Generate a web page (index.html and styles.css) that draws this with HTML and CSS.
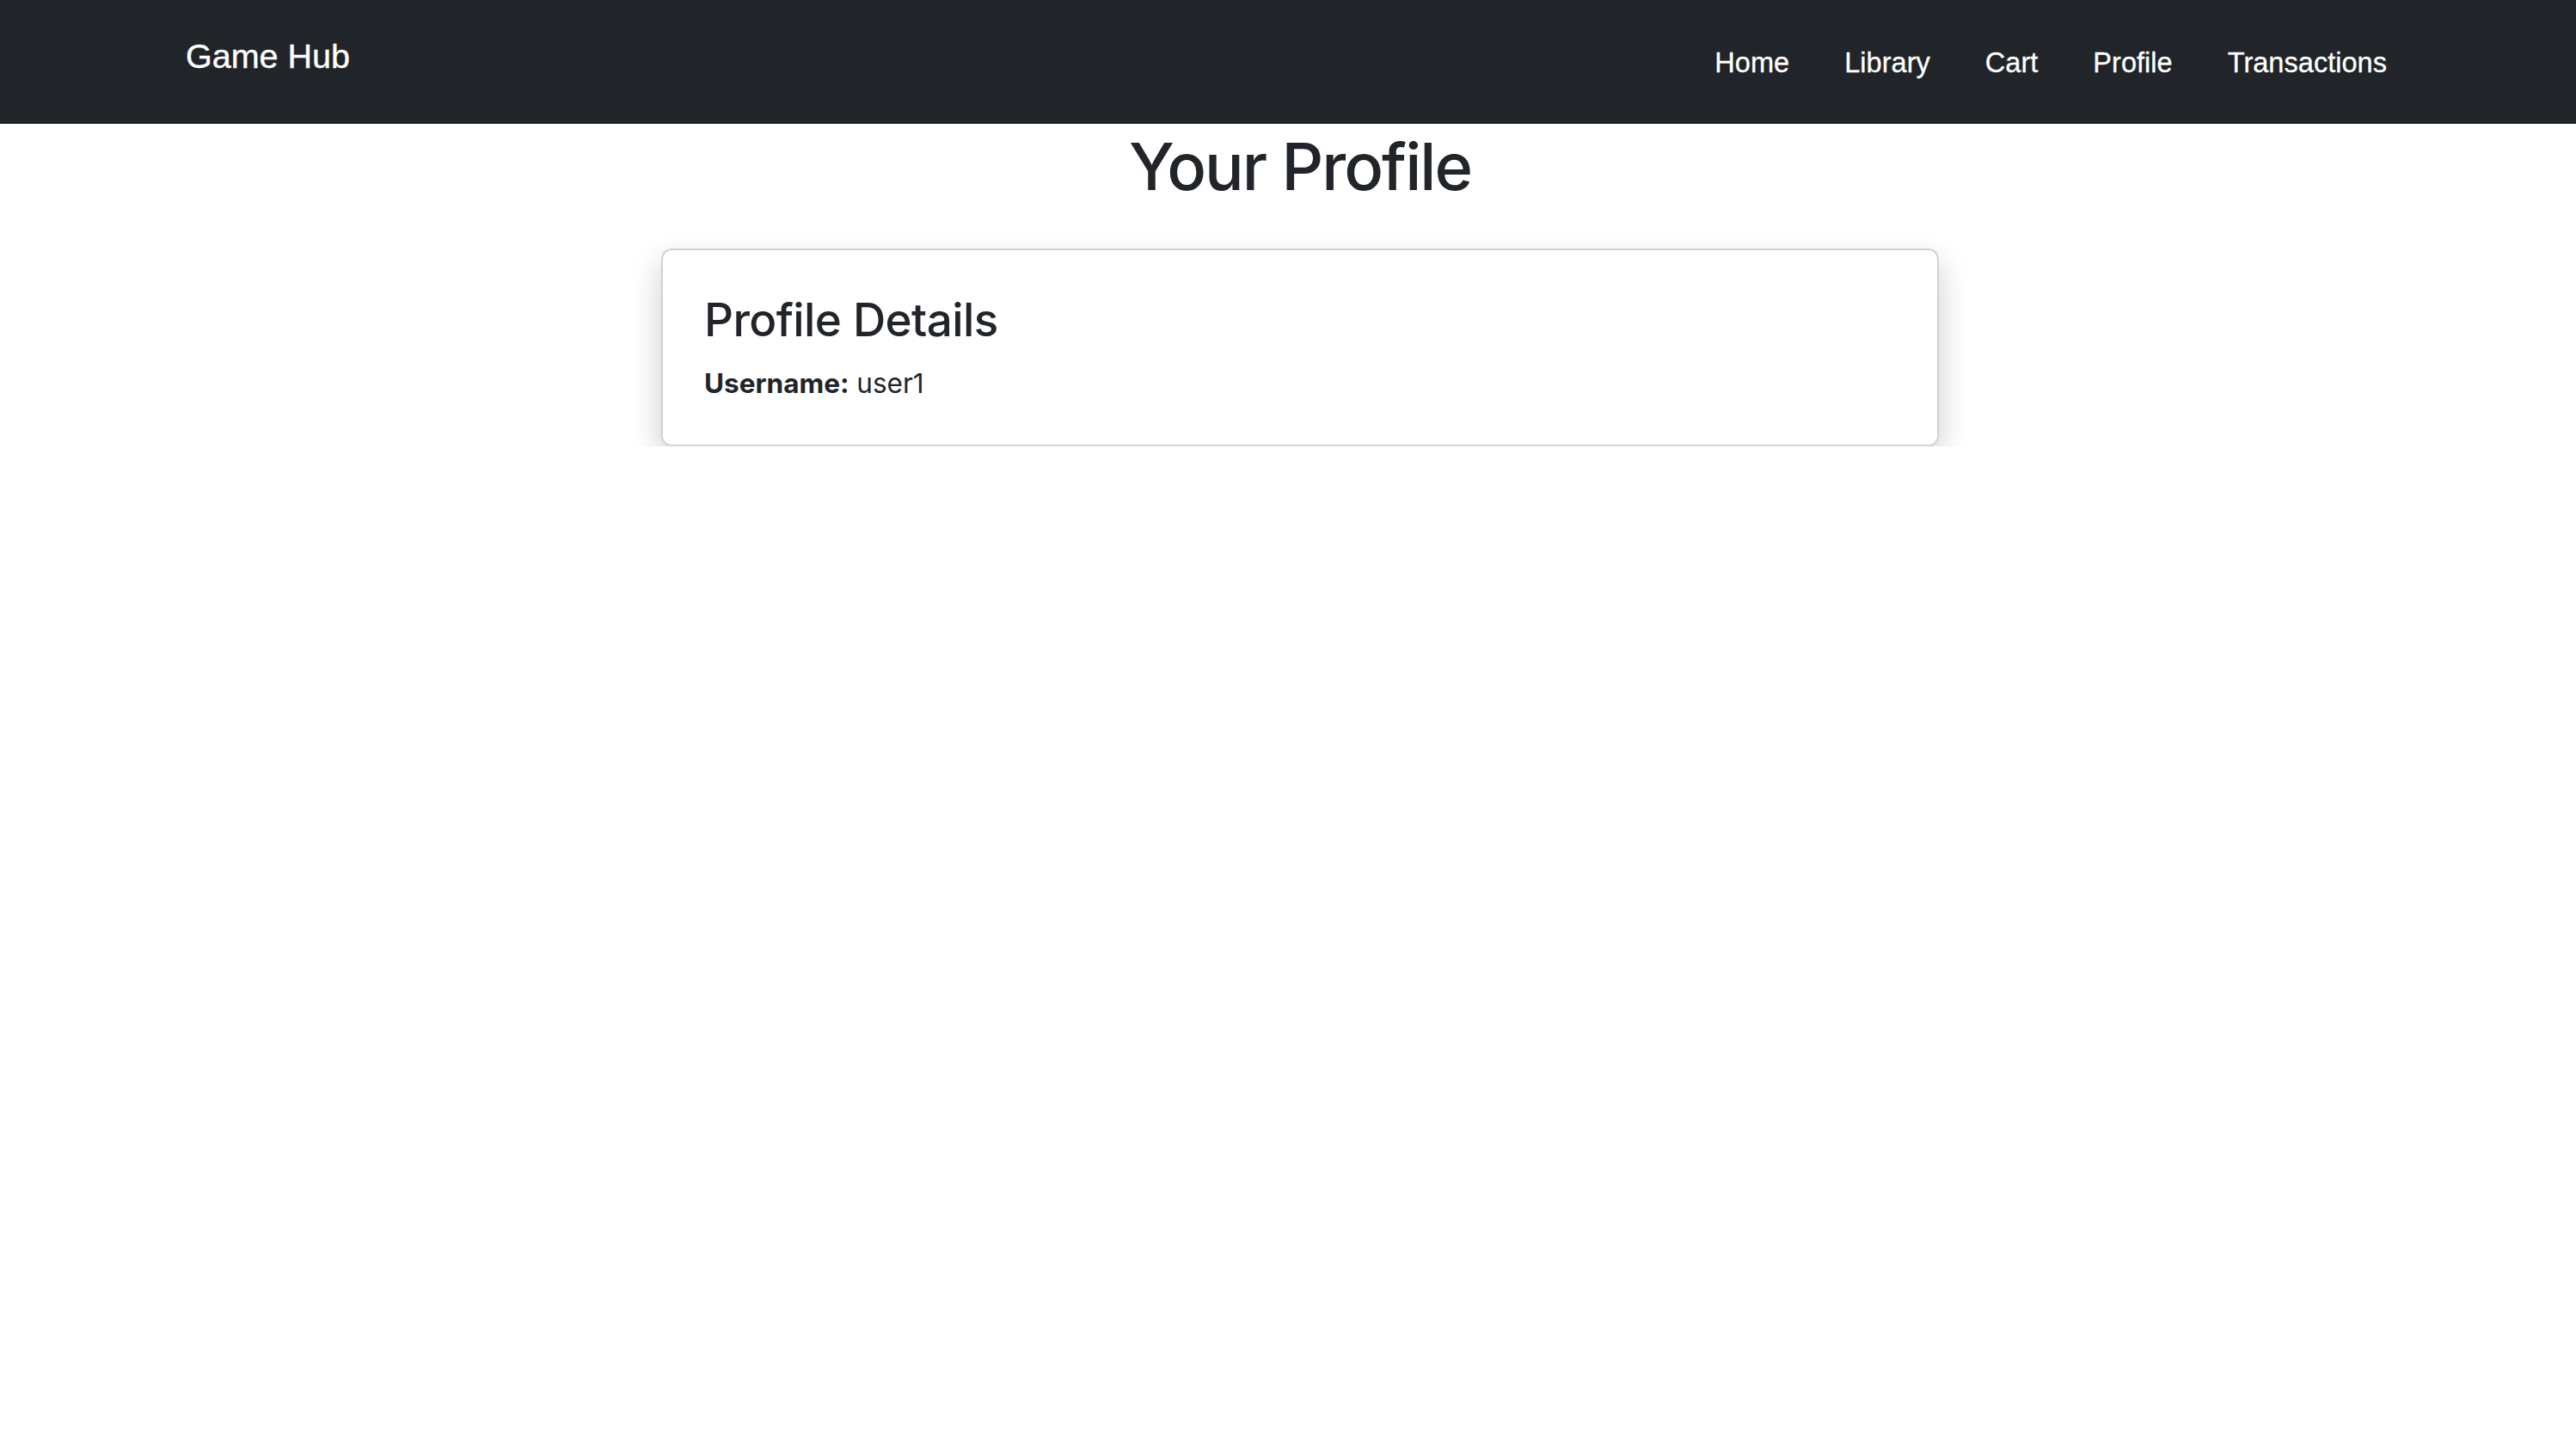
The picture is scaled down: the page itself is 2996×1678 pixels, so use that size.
FILE: index.html
```html
<!DOCTYPE html>
<html lang="en">
<head>
<meta charset="utf-8">
<title>Game Hub - Profile</title>
<link rel="stylesheet" href="styles.css">
</head>
<body>
<nav class="navbar">
  <a class="brand" href="#">Game Hub</a>
  <ul class="nav-links">
    <li><a href="#">Home</a></li>
    <li><a href="#">Library</a></li>
    <li><a href="#">Cart</a></li>
    <li><a href="#">Profile</a></li>
    <li><a href="#">Transactions</a></li>
  </ul>
</nav>
<main class="main">
  <h1 class="page-title">Your Profile</h1>
  <section class="card">
    <h3 class="card-title">Profile Details</h3>
    <p class="card-text"><strong>Username:</strong> user1</p>
  </section>
</main>
</body>
</html>
```

FILE: styles.css
```css
* { box-sizing: border-box; }
html, body { margin: 0; padding: 0; background: #fff; }
body {
  font-family: Inter, "Liberation Sans", Arial, sans-serif;
  color: #212529;
}
.navbar {
  height: 144px;
  background: #212529;
  display: flex;
  justify-content: space-between;
  align-items: flex-start;
  padding: 0 220px 0 216px;
}
.brand {
  font-family: "Liberation Sans", Arial, sans-serif;
  color: #fff;
  text-decoration: none;
  font-size: 39.5px;
  line-height: 60px;
  padding-top: 35px;
  -webkit-text-stroke: 0.4px #fff;
}
.nav-links {
  list-style: none;
  margin: 0;
  padding: 49px 0 0 0;
  display: flex;
  gap: 64px;
}
.nav-links a {
  font-family: "Liberation Sans", Arial, sans-serif;
  color: #fff;
  text-decoration: none;
  font-size: 32.6px;
  line-height: 48px;
  -webkit-text-stroke: 0.3px #fff;
}
.main {
  display: flex;
  flex-direction: column;
  align-items: center;
  padding-left: 28px;
}
.page-title {
  margin: 1px 0 48px;
  font-size: 76px;
  font-weight: 500;
  line-height: 96px;
  letter-spacing: -2px;
}
.card {
  width: 1486px;
  border: 2px solid #d3d3d3;
  border-radius: 12px;
  padding: 48px;
  background: #fff;
  box-shadow: 0 16px 36px rgba(0, 0, 0, 0.2);
}
.card-title {
  margin: 0 0 16px;
  font-size: 53px;
  font-weight: 500;
  line-height: 67px;
  letter-spacing: -0.6px;
}
.card-text {
  margin: 0;
  font-size: 31.5px;
  line-height: 47px;
}
.card-text strong { font-weight: 700; }
```
